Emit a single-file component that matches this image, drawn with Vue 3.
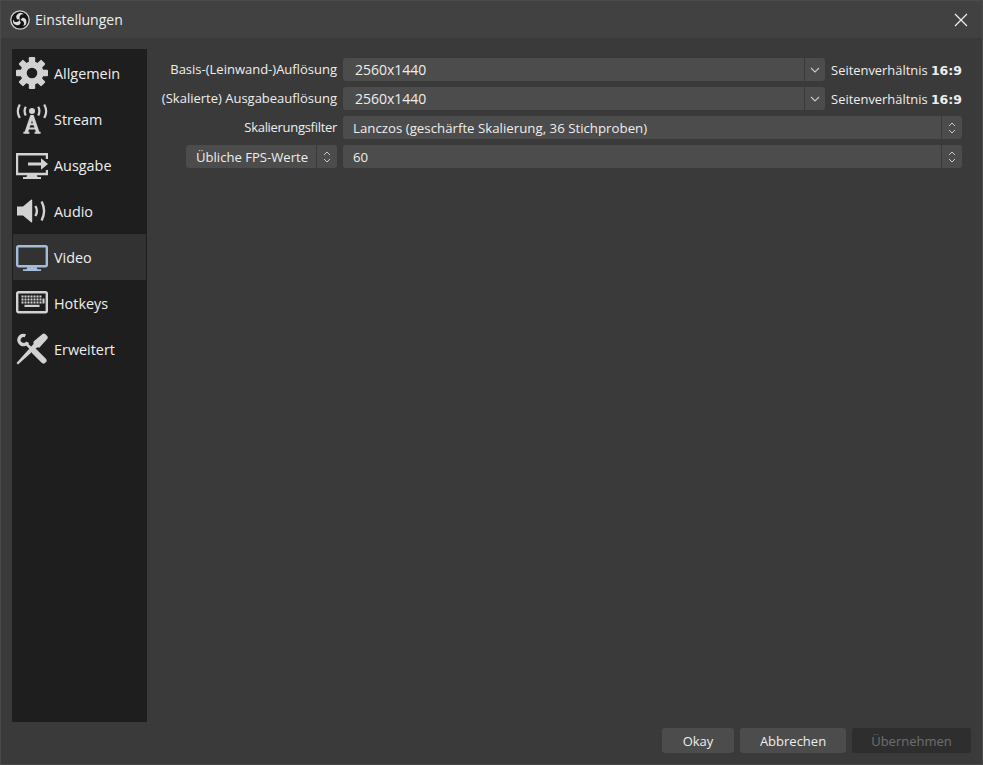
<script setup>
const navItems = [
  { key: 'gear', label: 'Allgemein' },
  { key: 'stream', label: 'Stream' },
  { key: 'output', label: 'Ausgabe' },
  { key: 'audio', label: 'Audio' },
  { key: 'video', label: 'Video', active: true },
  { key: 'hotkeys', label: 'Hotkeys' },
  { key: 'tools', label: 'Erweitert' }
]
const teeth = [0, 45, 90, 135, 180, 225, 270, 315]
const keyXs = [5.5, 8.5, 11.5, 14.5, 17.5, 20.5, 23.5]
const keyYs = [8.5, 11.5, 14.5]
const blades = [0, 120, 240]
</script>

<template>
  <div class="window">
    <header class="titlebar">
      <svg class="logo" width="20" height="20" viewBox="0 0 20 20">
        <circle cx="10" cy="10" r="9.2" fill="#141414" stroke="#cfcfcf" stroke-width="1.3" />
        <path v-for="a in blades" :key="a" d="M7.200 9.400A3.900 3.900 0 0 1 13.800 4.600A3.200 3.200 0 0 0 9.700 6.400Q9.100 8 10 9.800Q8.600 8.900 7.200 9.400Z" fill="#dcdcdc" :transform="`rotate(${a} 10 10)`" />
      </svg>
      <span class="title">Einstellungen</span>
      <svg class="close" width="14" height="14" viewBox="0 0 14 14">
        <path d="M1 1l12 12M13 1L1 13" stroke="#f0f0f0" stroke-width="1.2" fill="none" />
      </svg>
    </header>

    <div class="content">
      <nav class="sidebar">
        <div v-for="item in navItems" :key="item.key" class="nav-item" :class="{ active: item.active }">
          <svg class="nav-icon" width="32" height="32" viewBox="0 0 32 32">
            <g v-if="item.key === 'gear'" fill="#d2d2d2">
              <rect v-for="a in teeth" :key="a" x="12.800" y="0" width="6.400" height="8" rx="1" :transform="`rotate(${a} 16 16)`" />
              <circle cx="16" cy="16" r="8.400" fill="none" stroke="#d2d2d2" stroke-width="6.200" />
            </g>
            <g v-else-if="item.key === 'stream'" fill="none" stroke="#d2d2d2">
              <circle cx="16" cy="8" r="3" fill="#d2d2d2" stroke="none" />
              <path d="M9.800 3.800q-2.400 4.200 0 8.800M22.200 3.800q2.400 4.200 0 8.800" stroke-width="2.200" />
              <path d="M3.800 1.500q-4 7 0 13.500M28.200 1.500q4 7 0 13.500" stroke-width="2.200" />
              <path d="M16 12.500L10 30M16 12.500L22 30" stroke-width="3.400" />
              <path d="M11.800 25.500h8.400M12.800 21.300h6.400M7.400 29.700h6M18.600 29.700h6" stroke-width="2" />
            </g>
            <g v-else-if="item.key === 'output'">
              <path d="M31 10V5.200H1V25h30v-4" fill="none" stroke="#d2d2d2" stroke-width="2.400" />
              <path d="M11.500 25.500h9l1 2.500h3.500v2H7v-2h3.500z" fill="#d2d2d2" />
              <path d="M12 13.400h13V9.200l7 5.800-7 5.800v-4.200H12z" fill="#d2d2d2" />
            </g>
            <g v-else-if="item.key === 'audio'">
              <path d="M1 11.500h6l8-6.800q1.200-.4 1.200.6v21.400q0 1-1.200.6l-8-6.800H1z" fill="#d2d2d2" />
              <path d="M19.400 11q3 5 0 10" fill="none" stroke="#d2d2d2" stroke-width="2.400" />
              <path d="M25.600 6.500q5 9.500 0 19" fill="none" stroke="#d2d2d2" stroke-width="2.400" />
            </g>
            <g v-else-if="item.key === 'video'">
              <rect x="1.200" y="5.200" width="29.600" height="20" rx="1.400" fill="none" stroke="#a3bdd8" stroke-width="2.400" />
              <path d="M11.500 26h9l1 2.200h3.500V30H7v-1.800h3.500z" fill="#a3bdd8" />
            </g>
            <g v-else-if="item.key === 'hotkeys'">
              <rect x="1.200" y="5.200" width="29.600" height="20" rx="1.400" fill="none" stroke="#d2d2d2" stroke-width="2.400" />
              <g v-for="y in keyYs" :key="y">
                <rect v-for="x in keyXs" :key="x" :x="x" :y="y" width="2" height="2" fill="#d2d2d2" />
              </g>
              <rect x="26.500" y="11.500" width="2" height="5" fill="#d2d2d2" />
              <rect x="8.500" y="17.800" width="15" height="2.200" fill="#d2d2d2" />
            </g>
            <g v-else>
              <path d="M9.400 2.800A4.600 4.600 0 1 0 11.600 9.200" fill="none" stroke="#d2d2d2" stroke-width="3.400" />
              <path d="M9.500 10L18 18.500" stroke="#d2d2d2" stroke-width="2.600" fill="none" />
              <path d="M19 19L27.500 27.500" stroke="#d2d2d2" stroke-width="6" stroke-linecap="round" fill="none" />
              <path d="M26.500 .9q1.600-.9 2.700.2l2 2q1 1 .2 2.600L23.500 14.500L21 14.500L2 31.500L.5 30L17.500 11L17.500 8.500z" fill="#d2d2d2" />
            </g>
          </svg>
          <span>{{ item.label }}</span>
        </div>
      </nav>

      <main class="form">
        <label class="field-label">Basis-(Leinwand-)Auflösung</label>
        <div class="field-row">
          <div class="combo editable">
            <span class="value">2560x1440</span>
            <span class="arrow">
              <svg width="10" height="6" viewBox="0 0 10 6"><path d="M1 1l4 4 4-4" fill="none" stroke="#c8c8c8" stroke-width="1.100" /></svg>
            </span>
          </div>
          <span class="ratio">Seitenverhältnis <b>16:9</b></span>
        </div>

        <label class="field-label">(Skalierte) Ausgabeauflösung</label>
        <div class="field-row">
          <div class="combo editable">
            <span class="value">2560x1440</span>
            <span class="arrow">
              <svg width="10" height="6" viewBox="0 0 10 6"><path d="M1 1l4 4 4-4" fill="none" stroke="#c8c8c8" stroke-width="1.100" /></svg>
            </span>
          </div>
          <span class="ratio">Seitenverhältnis <b>16:9</b></span>
        </div>

        <label class="field-label tight">Skalierungsfilter</label>
        <div class="field-row">
          <div class="combo">
            <span class="value">Lanczos (geschärfte Skalierung, 36 Stichproben)</span>
            <span class="arrow">
              <svg width="8" height="14" viewBox="0 0 8 14"><path d="M1 5l3-3 3 3M1 9l3 3 3-3" fill="none" stroke="#c8c8c8" stroke-width="1" /></svg>
            </span>
          </div>
        </div>

        <div class="fps-cell">
          <div class="combo fps">
            <span class="value">Übliche FPS-Werte</span>
            <span class="arrow">
              <svg width="8" height="14" viewBox="0 0 8 14"><path d="M1 5l3-3 3 3M1 9l3 3 3-3" fill="none" stroke="#c8c8c8" stroke-width="1" /></svg>
            </span>
          </div>
        </div>
        <div class="field-row">
          <div class="combo">
            <span class="value">60</span>
            <span class="arrow">
              <svg width="8" height="14" viewBox="0 0 8 14"><path d="M1 5l3-3 3 3M1 9l3 3 3-3" fill="none" stroke="#c8c8c8" stroke-width="1" /></svg>
            </span>
          </div>
        </div>
      </main>
    </div>

    <footer class="footer">
      <button class="btn okay">Okay</button>
      <button class="btn cancel">Abbrechen</button>
      <button class="btn apply" disabled>Übernehmen</button>
    </footer>
  </div>
</template>

<style scoped>
.window {
  width: 983px;
  height: 765px;
  box-sizing: border-box;
  border: 1px solid #4a4a4a;
  display: flex;
  flex-direction: column;
  background: #3a3a3a;
  color: #eeeeee;
  font-family: "Open Sans", "Noto Sans", sans-serif;
  font-size: 13px;
  overflow: hidden;
}
.titlebar {
  height: 37px;
  flex: none;
  display: flex;
  align-items: center;
  padding: 0 14px 0 9px;
  background: #414141;
}
.logo { flex: none; }
.title {
  margin-left: 5px;
  font-size: 14px;
}
.close { margin-left: auto; }
.content {
  flex: 1;
  min-height: 0;
  display: flex;
  padding: 11px 0 0 11px;
}
.sidebar {
  width: 135px;
  box-sizing: border-box;
  flex: none;
  background: #1e1e1e;
  padding: 1px;
}
.nav-item {
  height: 46px;
  display: flex;
  align-items: center;
  gap: 6px;
  padding-left: 3px;
  font-size: 14.400px;
}
.nav-item.active { background: #323232; }
.nav-icon { flex: none; }
.form {
  flex: 1;
  display: grid;
  grid-template-columns: 190px 619px;
  grid-auto-rows: 23px;
  column-gap: 6px;
  row-gap: 6px;
  align-content: start;
  padding-top: 9px;
}
.field-label {
  text-align: right;
  line-height: 23px;
  white-space: nowrap;
}
.tight { letter-spacing: -0.3px; }
.field-row {
  display: flex;
  align-items: center;
  gap: 6px;
}
.fps-cell {
  display: flex;
  justify-content: flex-end;
}
.combo {
  flex: 1;
  height: 23px;
  display: flex;
  align-items: center;
  background: #4c4c4c;
  border-radius: 3px;
  overflow: hidden;
  min-width: 0;
}
.combo.fps {
  flex: none;
  width: 151px;
}
.value {
  flex: 1;
  padding-left: 10px;
  white-space: nowrap;
  font-size: 13.270px;
}
.fps .value { font-size: 13.100px; }
.editable .value {
  padding-left: 12px;
  font-size: 14px;
}
.arrow {
  flex: none;
  width: 20px;
  height: 23px;
  display: flex;
  align-items: center;
  justify-content: center;
  border-left: 1px solid #3a3a3a;
}
.ratio {
  flex: none;
  white-space: nowrap;
  font-size: 12.900px;
}
.ratio b {
  font-family: "DejaVu Sans", sans-serif;
  font-size: 12.500px;
}
.footer {
  height: 42px;
  flex: none;
  display: flex;
  justify-content: flex-end;
  gap: 6px;
  padding: 6px 11px 0 0;
  box-sizing: border-box;
}
.btn {
  height: 25px;
  border: none;
  border-radius: 3px;
  background: #4c4c4c;
  color: #eeeeee;
  font: inherit;
  padding: 0;
}
.okay { width: 72px; }
.cancel { width: 106px; }
.apply {
  width: 119px;
  background: #2e2e2e;
  color: #6e6e6e;
}
</style>
